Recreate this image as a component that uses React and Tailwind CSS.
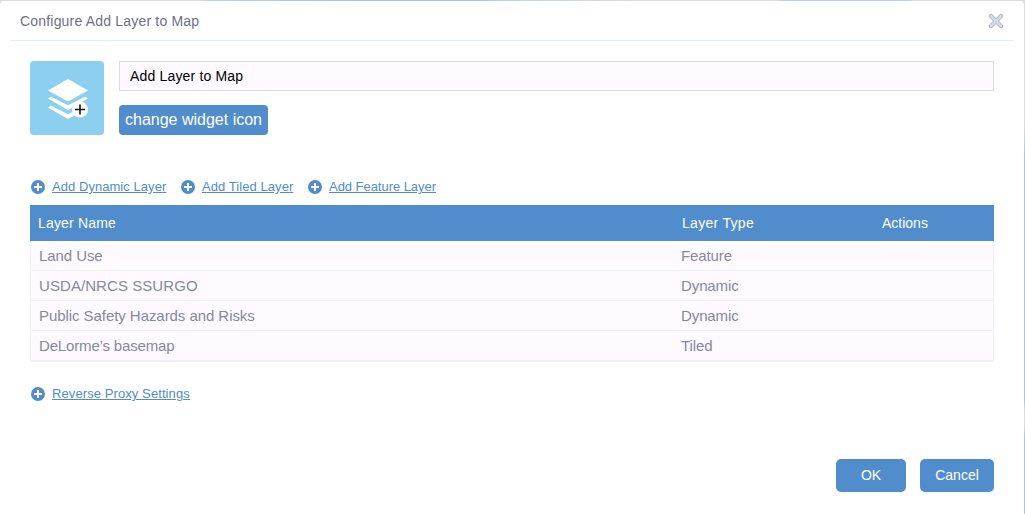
const LAYERS = [
  { name: 'Land Use', type: 'Feature', tracking: 'tracking-[-0.08px]' },
  { name: 'USDA/NRCS SSURGO', type: 'Dynamic', tracking: 'tracking-[0.07px]' },
  { name: 'Public Safety Hazards and Risks', type: 'Dynamic', tracking: 'tracking-[-0.06px]' },
  { name: 'DeLorme’s basemap', type: 'Tiled', tracking: 'tracking-[-0.16px]' },
];

function AddLink({ children, className = '' }) {
  return (
    <a className={`flex h-4 items-center text-[13px] leading-4 text-[#518dca] ${className}`}>
      <svg className="mt-px mr-[7px] h-[14px] w-[14px] shrink-0" viewBox="0 0 14 14">
        <circle cx="7" cy="7" r="7" fill="#518dcd" />
        <path d="M7 3v8M3 7h8" stroke="#fff" strokeWidth="2" />
      </svg>
      <span className="pt-[2px] whitespace-nowrap underline underline-offset-1">{children}</span>
    </a>
  );
}

function LayersIcon() {
  return (
    <svg className="h-[74px] w-[74px] shrink-0" viewBox="0 0 74 74">
      <rect width="74" height="74" rx="4" fill="#8dcfef" />
      <path d="M38 18 58 29.500 38 40.500 18 29.500Z" fill="#fff" />
      <path d="M18 37.500 21 35.700 38 44.300 55 35.700 58 37.500 38 49Z" fill="#fff" />
      <path d="M18 46.500 21 44.500 38 53.200 55 44.500 58 46.500 38 58Z" fill="#fff" />
      <circle cx="50" cy="48.500" r="8" fill="#fff" />
      <path d="M50 43.500v10M45 48.500h10" stroke="#111" strokeWidth="1.600" />
    </svg>
  );
}

function CloseIcon() {
  return (
    <svg className="h-4 w-4" viewBox="0 0 16 16">
      <path d="M3 3 13 13M13 3 3 13" stroke="#adb0c2" strokeWidth="4.200" strokeLinecap="round" />
      <path d="M3 3 13 13M13 3 3 13" stroke="#d5d9e8" strokeWidth="2.500" strokeLinecap="round" />
    </svg>
  );
}

export default function App() {
  return (
    <div className="flex h-[514px] w-[1025px] flex-col bg-[linear-gradient(90deg,#dcdcdc_0,#dcdcdc_200px,#b9d4e2_210px,#9fc5e2_350px,#9fc5e2_480px,#b9d4e2_500px,#dcdcdc_630px,#dcdcdc_775px,#b4d5e5_785px,#b4d5e5_910px,#dcdcdc_912px)] pt-px font-['Liberation_Sans',sans-serif]">
      <div className="flex min-h-0 flex-1">
        <div className="flex w-[1024px] flex-col rounded-t-[4px] bg-white">
          <header className="mx-[10px] flex h-10 shrink-0 items-center justify-between border-b border-[#e3eef8] pr-[10px] pl-[10px]">
            <h1 className="pt-[2px] text-[14px] tracking-[0.19px] text-[#6e7086]">Configure Add Layer to Map</h1>
            <CloseIcon />
          </header>
          <main className="flex flex-1 flex-col px-[30px] pt-5">
            <div className="flex h-[74px] gap-[15px]">
              <LayersIcon />
              <div className="flex flex-1 flex-col items-start justify-between">
                <div className="flex h-[30px] w-full items-center border border-[#dcdde3] bg-[#fefaff] px-[10px] text-[14px] tracking-[0.17px] text-black">
                  <span>Add Layer to Map</span>
                </div>
                <button className="flex h-[30px] w-[149px] items-center justify-center rounded-[4px] bg-[#518dcd] text-[16px] whitespace-nowrap text-white">
                  <span>change widget icon</span>
                </button>
              </div>
            </div>
            <div className="mt-[43px] flex pl-px">
              <AddLink className="w-[150px] tracking-[0.05px]">Add Dynamic Layer</AddLink>
              <AddLink className="w-[127px] tracking-[0.07px]">Add Tiled Layer</AddLink>
              <AddLink className="tracking-[-0.04px]">Add Feature Layer</AddLink>
            </div>
            <div className="mt-[11px] flex h-9 items-center bg-[#518dcd] pl-2 text-[14px] text-white">
              <div className="w-[644px] tracking-[0.18px]">Layer Name</div>
              <div className="w-[200px] tracking-[0.3px]">Layer Type</div>
              <div>Actions</div>
            </div>
            <div className="border-x border-b border-[#edf1f7] bg-[#fefaff] text-[15px] text-[#828a9f]">
              {LAYERS.map((layer) => (
                <div key={layer.name} className="flex h-[30px] items-center border-b border-[#edf1f7] pt-[2px] pl-2">
                  <div className={`w-[642px] ${layer.tracking}`}>{layer.name}</div>
                  <div className="tracking-[-0.1px]">{layer.type}</div>
                </div>
              ))}
            </div>
            <div className="mt-[23px] flex pl-px">
              <AddLink className="tracking-[0.09px]">Reverse Proxy Settings</AddLink>
            </div>
            <footer className="mt-auto mb-[22px] flex justify-end gap-[14px] text-[14px] text-white">
              <button className="h-[33px] w-[70px] rounded-[5px] bg-[#518dcd]">OK</button>
              <button className="h-[33px] w-[74px] rounded-[5px] bg-[#518dcd]">Cancel</button>
            </footer>
          </main>
        </div>
        <div className="flex-1 bg-[linear-gradient(#dcdcdc_0,#dcdcdc_125px,#a5cbdc_155px,#a5cbdc_400px,#dcdcdc_410px,#dcdcdc_425px,#a5cbdc_435px)]" />
      </div>
    </div>
  );
}
